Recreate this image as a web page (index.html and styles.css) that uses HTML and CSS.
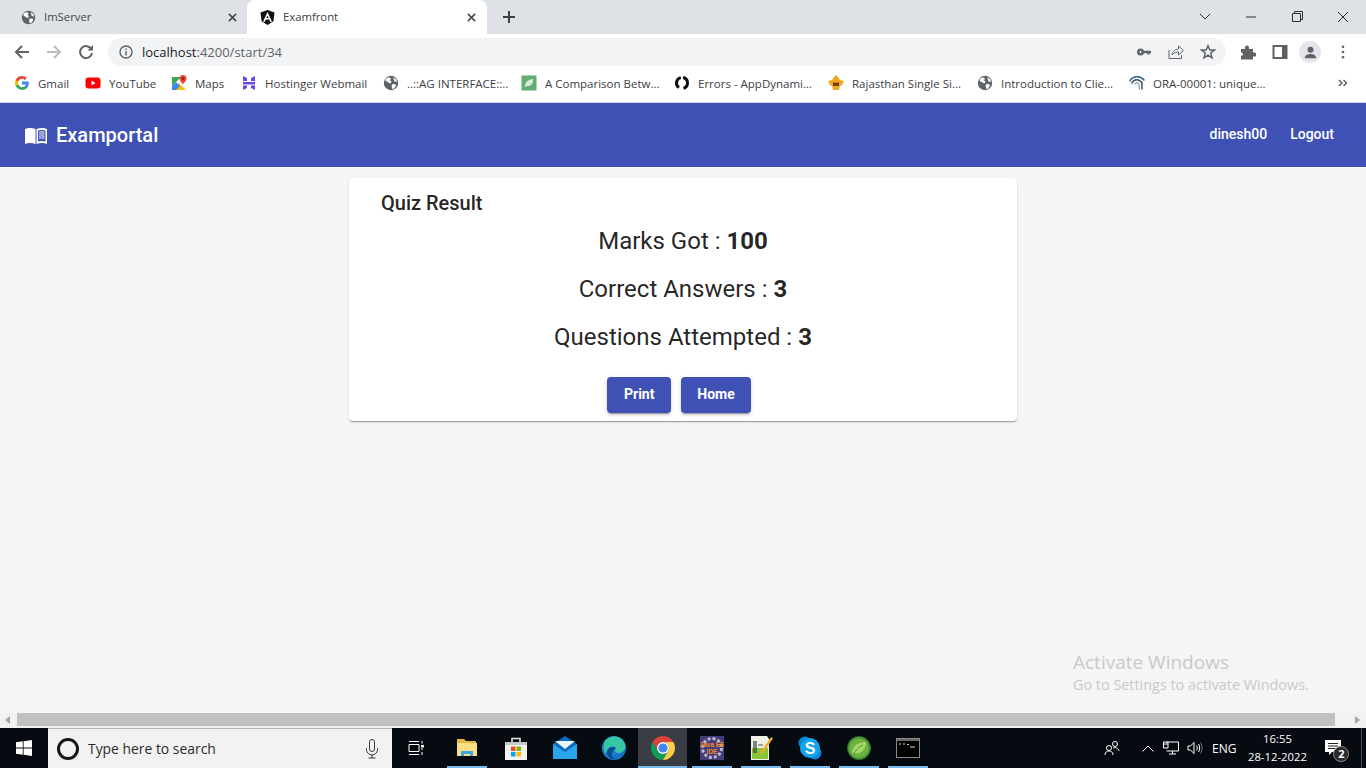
FILE: index.html
```html
<!DOCTYPE html>
<html lang="en">
<head>
  <meta charset="UTF-8">
  <title>Examfront</title>
  <link rel="stylesheet" href="styles.css">
</head>
<body>

  <svg class="defs" width="0" height="0">
    <symbol id="globe" viewBox="0 0 16 16">
      <circle cx="8" cy="8" r="7.2" fill="#5f6368"/>
      <path d="M3 3.4 6.2 2.2 8 3.4 7 5.2 8.6 6.4 7.4 8.4 5.2 7.6 2.4 5.6ZM9 9.2 12.2 9 13 11 11 13.6 9.4 14 8.6 11.4ZM10.2 2.2 13.4 4.6 13.8 7 11.4 6.4 10.8 4Z" fill="#fff"/>
    </symbol>
  </svg>

  <header class="browser">
    <div class="tabstrip">
      <div class="tab">
        <svg class="favicon" viewBox="0 0 16 16"><use href="#globe"/></svg>
        <span class="tab-title">ImServer</span>
        <svg class="tab-close" viewBox="0 0 10 10"><path d="M1 1 9 9M9 1 1 9"/></svg>
      </div>
      <div class="tab tab-active">
        <svg class="favicon" viewBox="0 0 16 16">
          <path d="M8 0 15.5 2.6 14.3 12 8 16 1.700 12 .5 2.6Z" fill="#111"/>
          <path d="M8 2 3.2 12.5H5.2L6.2 10H9.8L10.8 12.5H12.8ZM8 5.8 9.2 8.5H6.8Z" fill="#fff"/>
        </svg>
        <span class="tab-title">Examfront</span>
        <svg class="tab-close" viewBox="0 0 10 10"><path d="M1 1 9 9M9 1 1 9"/></svg>
      </div>
      <svg class="new-tab" viewBox="0 0 12 12"><path d="M6 0V12M0 6H12"/></svg>
      <div class="window-controls">
        <svg viewBox="0 0 46 14"><path d="M18 4 23 9 28 4"/></svg>
        <svg viewBox="0 0 46 14"><path d="M18 7H28"/></svg>
        <svg viewBox="0 0 46 14"><path d="M18.5 3.5H26.5V11.5H18.5ZM20.5 3.5V1.5H28.5V9.5H26.5"/></svg>
        <svg viewBox="0 0 46 14"><path d="M18 2 28 12M28 2 18 12"/></svg>
      </div>
    </div>

    <div class="toolbar">
      <div class="nav-buttons">
        <svg viewBox="0 0 16 16"><path d="M15 8H2M8 2 2 8 8 14"/></svg>
        <svg class="nav-disabled" viewBox="0 0 16 16"><path d="M1 8H14M8 2 14 8 8 14"/></svg>
        <svg viewBox="0 0 16 16"><path d="M13.5 5.5A6 6 0 1 0 14 9"/><path class="solid" d="M9.5 6.5H15V1Z"/></svg>
      </div>
      <div class="omnibox">
        <svg class="info" viewBox="0 0 14 14"><circle cx="7" cy="7" r="6"/><path d="M7 6V10.5M7 3.5V5"/></svg>
        <span class="url">localhost<span class="url-path">:4200/start/34</span></span>
        <div class="omni-icons">
          <svg viewBox="0 0 16 16"><circle class="solid" cx="4.5" cy="8" r="3.5"/><path d="M7 8H15M12.5 8V10.5" stroke-width="2.4"/><circle cx="4.5" cy="8" r="1" fill="#fff" stroke="none"/></svg>
          <svg viewBox="0 0 16 16"><path class="thin" d="M1 6V14.5H13.5V11M4 11C4.5 7 8 5 10.5 5V2L15.5 6.5 10.5 11V8C8 8 5.5 9 4 11Z"/></svg>
          <svg viewBox="0 0 16 16"><path d="M8 1.8 9.8 6H14.5L10.8 9 12 13.8 8 11.2 4 13.8 5.2 9 1.5 6H6.2Z"/></svg>
        </div>
      </div>
      <div class="toolbar-icons">
        <svg viewBox="0 0 16 16"><path class="solid" d="M1 5H5V3.5A2 2 0 0 1 9 3.5V5H13V8.5H14.5A2 2 0 0 1 14.5 12.5H13V15.5H1V11.8H2A2 2 0 0 0 2 8.5H1Z"/></svg>
        <svg viewBox="0 0 16 16"><path d="M1.5 2H14.5V14H1.5Z" stroke-width="2"/><path class="solid" d="M10 2H15V14H10Z"/></svg>
        <div class="avatar">
          <svg viewBox="0 0 16 16"><circle class="solid" cx="8" cy="5" r="3.2"/><path class="solid" d="M2 14C2 10.5 5 9.5 8 9.5S14 10.5 14 14Z"/></svg>
        </div>
        <svg class="dots" viewBox="0 0 4 16"><circle cx="2" cy="2" r="1.5"/><circle cx="2" cy="8" r="1.5"/><circle cx="2" cy="14" r="1.5"/></svg>
      </div>
    </div>

    <div class="bookmarks">
      <a class="bookmark bm-gmail">
        <svg viewBox="0 0 16 16">
          <path d="M14.8 8.2C14.8 7.6 14.7 7.1 14.6 6.6H8V9.4H11.8C11.6 10.3 11.1 11 10.3 11.5V13.3H12.6C14 12 14.8 10.3 14.8 8.2Z" fill="#4285f4"/>
          <path d="M8 15C9.9 15 11.4 14.4 12.6 13.3L10.3 11.5C9.7 11.9 8.9 12.2 8 12.2 6.2 12.2 4.6 11 4.1 9.3H1.7V11.1C2.9 13.4 5.3 15 8 15Z" fill="#34a853"/>
          <path d="M4.1 9.3C3.8 8.4 3.8 7.6 4.1 6.7V4.9H1.7C.8 6.8.8 9.2 1.7 11.1Z" fill="#fbbc05"/>
          <path d="M8 3.8C9 3.8 10 4.2 10.7 4.9L12.7 2.9C11.4 1.7 9.8 1 8 1 5.3 1 2.9 2.6 1.7 4.9L4.1 6.7C4.6 5 6.2 3.8 8 3.8Z" fill="#ea4335"/>
        </svg>
        <span>Gmail</span>
      </a>
      <a class="bookmark bm-youtube">
        <svg viewBox="0 0 16 16"><rect x="0.5" y="2.5" width="15" height="11" rx="3" fill="#f00"/><path d="M6.5 5.5 10.5 8 6.5 10.5Z" fill="#fff"/></svg>
        <span>YouTube</span>
      </a>
      <a class="bookmark bm-maps">
        <svg viewBox="0 0 16 16">
          <path d="M1 2H10L1 11Z" fill="#34a853"/>
          <path d="M1 15 8 8 15 15Z" fill="#fbbc05"/>
          <path d="M1 11 5 7 9 11 5 15H1Z" fill="#4285f4"/>
          <path d="M15 15 9 9 11 7 15 11Z" fill="#f1f3f4"/>
          <path d="M12 0A3.5 3.5 0 0 0 8.5 3.5C8.5 6 12 9 12 9S15.5 6 15.5 3.5A3.5 3.5 0 0 0 12 0Z" fill="#ea4335"/>
          <circle cx="12" cy="3.5" r="1.2" fill="#8b1a10"/>
        </svg>
        <span>Maps</span>
      </a>
      <a class="bookmark bm-hostinger">
        <svg viewBox="0 0 16 16"><path d="M2 1 6 3V6H2ZM14 15 10 13V10.5H14ZM2 7H14V9.5H2ZM10 3 14 1V6H10ZM6 13 2 15V10.5H6Z" fill="#6747e6"/></svg>
        <span>Hostinger Webmail</span>
      </a>
      <a class="bookmark bm-ag">
        <svg viewBox="0 0 16 16"><use href="#globe"/></svg>
        <span>..::AG INTERFACE::..</span>
      </a>
      <a class="bookmark bm-comparison">
        <svg viewBox="0 0 16 16"><rect x="0.5" y="0.5" width="15" height="15" fill="#62ae72"/><path d="M4 12C4 7 7 4.5 12 4 12.5 8.5 10 11.5 6 11L4 12.5Z" fill="#d8ecd8"/></svg>
        <span>A Comparison Betw...</span>
      </a>
      <a class="bookmark bm-appd">
        <svg viewBox="0 0 16 16" fill="none" stroke="#0c0c0c" stroke-width="3"><path d="M6.8 2.6A5.5 5.5 0 0 0 5 12.6"/><path d="M9 2.6A5.5 5.5 0 0 1 9.5 13.3"/></svg>
        <span>Errors - AppDynami...</span>
      </a>
      <a class="bookmark bm-rajasthan">
        <svg viewBox="0 0 16 16"><path d="M0 6 4 5 6 2 8 0 10 2 12 5 16 6 14 10 12 11 11 15H5L4 11 2 10Z" fill="#f0a722"/><path d="M5 7.5H11V11H5Z" fill="#7a3e12"/></svg>
        <span>Rajasthan Single Si...</span>
      </a>
      <a class="bookmark bm-intro">
        <svg viewBox="0 0 16 16"><use href="#globe"/></svg>
        <span>Introduction to Clie...</span>
      </a>
      <a class="bookmark bm-ora">
        <svg viewBox="0 0 16 16" fill="none" stroke-linecap="round">
          <path d="M1 6C3 1 11 0 15 5" stroke="#29628f" stroke-width="1.5"/>
          <path d="M3 8C5 4 10 3.5 13 8L13 14" stroke="#4a4f55" stroke-width="1.5"/>
          <path d="M6 9C7 7 9 7 10 9.5L10.5 14" stroke="#6fa8d0" stroke-width="1.3"/>
        </svg>
        <span>ORA-00001: unique...</span>
      </a>
      <svg class="bookmarks-more" viewBox="0 0 10 8"><path d="M1 1 4 4 1 7M5.5 1 8.5 4 5.5 7"/></svg>
    </div>
  </header>

  <nav class="navbar">
    <a class="brand">
      <svg class="brand-icon" viewBox="0 0 22 17">
        <path d="M0 2C3 .5 7 .5 10.5 2V17C7 15.5 3 15.5 0 17Z" fill="#fff"/>
        <path d="M11.5 2C15 .5 19 .5 22 2V17C19 15.5 15 15.5 11.5 17Z" fill="#fff"/>
        <path d="M13 3.5C15 2.7 18 2.7 20.5 3.5V14.5C18 13.8 15 13.8 13 14.5Z" fill="#3f51b5"/>
        <path d="M14 5.3C15.5 4.8 17.5 4.8 19.5 5.3M14 7.3C15.5 6.8 17.5 6.8 19.5 7.3M14 9.3C15.5 8.8 17.5 8.8 19.5 9.3M14 11.3C15.5 10.8 17.5 10.8 19.5 11.3" fill="none" stroke="#fff" stroke-width="1"/>
      </svg>
      <span>Examportal</span>
    </a>
    <div class="nav-links">
      <a class="nav-link">dinesh00</a>
      <a class="nav-link">Logout</a>
    </div>
  </nav>

  <main class="page">
    <section class="card">
      <h2 class="card-title">Quiz Result</h2>
      <div class="result">
        <h1>Marks Got : <b>100</b></h1>
        <h1>Correct Answers : <b>3</b></h1>
        <h1>Questions Attempted : <b>3</b></h1>
      </div>
      <div class="card-actions">
        <button class="btn">Print</button>
        <button class="btn">Home</button>
      </div>
    </section>
    <div class="activate">
      <div class="activate-title">Activate Windows</div>
      <div class="activate-sub">Go to Settings to activate Windows.</div>
    </div>
  </main>

  <div class="hscroll">
    <svg class="arrow" viewBox="0 0 6 8"><path d="M5 0V8L0 4Z"/></svg>
    <div class="hscroll-track"><div class="hscroll-thumb"></div></div>
    <svg class="arrow" viewBox="0 0 6 8"><path d="M1 0V8L6 4Z"/></svg>
  </div>

  <footer class="taskbar">
    <div class="start">
      <svg viewBox="0 0 16 16"><path d="M0 2.3 6.8 1.3V7.6H0ZM7.6 1.2 16 0V7.6H7.6ZM0 8.4H6.8V14.7L0 13.7ZM7.6 8.4H16V16L7.6 14.8Z" fill="#fff"/></svg>
    </div>
    <div class="search">
      <span class="cortana"></span>
      <span class="search-text">Type here to search</span>
      <svg class="mic" viewBox="0 0 14 20"><rect x="4.5" y="0.5" width="5" height="12" rx="2.5"/><path d="M1.5 9V10.5A5.5 5.5 0 0 0 12.5 10.5V9M7 16V19M3.5 19H10.5"/></svg>
    </div>
    <div class="task-view">
      <svg viewBox="0 0 16 16"><path d="M1 4.5H11V11.5H1ZM1 1.5H11M1 14.5H11M14 1V3.5M14 8V10M14 12V15" fill="none" stroke="#fff" stroke-width="1"/><rect x="13" y="5" width="3" height="2.5" fill="#fff"/></svg>
    </div>
    <div class="apps">
      <div class="app open">
        <svg viewBox="0 0 24 24">
          <path d="M2 3H9L11 5H21V9H2Z" fill="#e8b73f"/>
          <path d="M2 7H22V20H2Z" fill="#fbdf84"/>
          <path d="M6 20V15H18V20H15V18H9V20Z" fill="#3fa6de"/>
        </svg>
      </div>
      <div class="app">
        <svg viewBox="0 0 24 24">
          <path d="M8 7V2.5H16V7" fill="none" stroke="#e6e6e6" stroke-width="1.6"/>
          <path d="M1 6H23V24H1Z" fill="#f3f3f3"/>
          <path d="M1 6H23V9H1Z" fill="#c9c9c9"/>
          <rect x="7" y="10.5" width="4.5" height="4.5" fill="#f25022"/>
          <rect x="12.5" y="10.5" width="4.5" height="4.5" fill="#7fba00"/>
          <rect x="7" y="16" width="4.5" height="4.5" fill="#00a4ef"/>
          <rect x="12.5" y="16" width="4.5" height="4.5" fill="#ffb900"/>
        </svg>
      </div>
      <div class="app">
        <svg viewBox="0 0 24 24">
          <path d="M0 8 12 0 24 8V23H0Z" fill="#0b6cbf"/>
          <path d="M0 8 12 16 24 8V23H0Z" fill="#29a5ea"/>
          <path d="M2 5 22 5 12 13Z" fill="#e8f3fb"/>
        </svg>
      </div>
      <div class="app">
        <svg viewBox="0 0 24 24">
          <circle cx="12" cy="12" r="12" fill="#1d7fd1"/>
          <path d="M3 5C7-1 19-2 23 8 24 13 22 17 17 17 13 17 12 14 14 12 10 9 4 12 4 18 1 14 1 9 3 5Z" fill="#35c7a5"/>
          <path d="M24 11C24 16 21 20 17 22 13 24 7 24 4 18 6 21 12 22 14 18 15 17 21 19 24 11Z" fill="#1572c4"/>
          <path d="M14 12C10 9 5 12 5 17 5 21 10 24 14 23 9 22 8 16 14 12Z" fill="#0c4d92"/>
        </svg>
      </div>
      <div class="app app-active open">
        <svg viewBox="0 0 24 24">
          <path d="M12 0A12 12 0 0 1 22.39 6H12A6 6 0 0 0 6.8 15L1.61 6A12 12 0 0 1 12 0Z" fill="#db4437"/>
          <path d="M12 24A12 12 0 0 1 1.61 6L6.8 15A6 6 0 0 0 17.2 15Z" fill="#0f9d58"/>
          <path d="M22.39 6A12 12 0 0 1 12 24L17.2 15A6 6 0 0 0 12 6H22.39Z" fill="#ffcd40"/>
          <circle cx="12" cy="12" r="6" fill="#fff"/>
          <circle cx="12" cy="12" r="4.6" fill="#4285f4"/>
        </svg>
      </div>
      <div class="app open">
        <svg viewBox="0 0 24 24">
          <rect width="24" height="24" fill="#473b7c"/>
          <circle cx="12" cy="12" r="9.5" fill="none" stroke="#b9b9c4" stroke-width="3" stroke-dasharray="3 2"/>
          <text x="12" y="11" class="ide-text">Java EE</text>
          <text x="12" y="18" class="ide-text">IDE</text>
        </svg>
      </div>
      <div class="app open">
        <svg viewBox="0 0 24 24">
          <path d="M2 0H18L20 3V24H2Z" fill="#eef0e8"/>
          <path d="M3 12H19V23H3Z" fill="#86c43a"/>
          <path d="M5 5V17M7 5V17" stroke="#3a3a3a" stroke-width="1.2"/>
          <path d="M9 9H14" stroke="#555" stroke-width="1"/>
          <path d="M22 1 24 2.5 14 17 11 19 12 15.5Z" fill="#f0a928"/>
        </svg>
      </div>
      <div class="app open">
        <svg viewBox="0 0 24 24">
          <circle cx="7" cy="7" r="6.5" fill="#0a84d6"/>
          <circle cx="17" cy="17" r="6.5" fill="#0a84d6"/>
          <circle cx="12" cy="12" r="10" fill="#12a5eb"/>
          <text x="12" y="17.5" class="skype-text">S</text>
        </svg>
      </div>
      <div class="app open">
        <svg viewBox="0 0 24 24">
          <circle cx="12" cy="12" r="11.5" fill="#4a9a38" stroke="#2f7a2a" stroke-width="1" stroke-dasharray="2 1.5"/>
          <circle cx="12" cy="12" r="9.5" fill="#6cb33f"/>
          <path d="M5 18C5 10 11 6 19 6 19 13 14 19 7 17Z" fill="#a5d86b"/>
          <path d="M6 18C9 14 12 11 16 9" stroke="#4a9a38" fill="none"/>
        </svg>
      </div>
      <div class="app open">
        <svg viewBox="0 0 24 20">
          <rect x="0.5" y="0.5" width="23" height="19" fill="#000" stroke="#8a8a8a"/>
          <rect x="1" y="1" width="22" height="2" fill="#6a6a6a"/>
          <path d="M3 6H5M7 6H9M11 6.5H13M14 9H19" stroke="#d8d8d8" stroke-width="1"/>
        </svg>
      </div>
    </div>
    <div class="tray">
      <svg class="tray-people" viewBox="0 0 16 16"><circle cx="5" cy="8" r="2.5"/><path d="M1 15C1 12 3 11 5 11S9 12 9 15"/><circle cx="11" cy="4" r="2.5"/><path d="M9 8C11 7 14 7.5 15 11"/></svg>
      <svg class="tray-chevron" viewBox="0 0 12 7"><path d="M0.5 6.5 6 1 11.5 6.5"/></svg>
      <svg class="tray-net" viewBox="0 0 16 14"><path d="M3.5 1H15.5V10H3.5M9.5 10V13M6 13H13"/><path d="M.5 1H5V7H.5ZM.5 3H5"/></svg>
      <svg class="tray-vol" viewBox="0 0 16 14"><path d="M1 5H3.5L7 1.5V12.5L3.5 9H1ZM9.5 4.5C10.5 6 10.5 8 9.5 9.5M11.5 3C13 5 13 9 11.5 11"/><path class="tray-vol-dim" d="M13.5 1.5C15.5 4.5 15.5 9.5 13.5 12.5"/></svg>
      <span class="tray-lang">ENG</span>
      <div class="clock">
        <div>16:55</div>
        <div>28-12-2022</div>
      </div>
      <div class="notify">
        <svg viewBox="0 0 16 16"><path d="M0 0H16V12H7L4 15V12H0Z" fill="#fff"/><path d="M3 3.5H13M3 6H13M3 8.5H10" stroke="#222" stroke-width="1"/></svg>
        <span class="notify-count">2</span>
      </div>
      <span class="show-desktop"></span>
    </div>
  </footer>

</body>
</html>
```

FILE: styles.css
```css
* {
  box-sizing: border-box;
}

html, body {
  height: 100%;
}

body {
  margin: 0;
  width: 1366px;
  height: 768px;
  overflow: hidden;
  display: flex;
  flex-direction: column;
  font-family: Roboto, sans-serif;
  background: #f5f5f5;
  color: rgba(0, 0, 0, 0.87);
}

svg {
  display: block;
  flex: none;
}

.defs {
  position: absolute;
}

.solid {
  fill: #5f6368;
  stroke: none;
}

.browser {
  font-family: "Open Sans", sans-serif;
  background: #fff;
  height: 103px;
  border-bottom: 1px solid #d0d2d6;
}

.tabstrip {
  height: 34px;
  background: #dee1e6;
  display: flex;
  align-items: center;
  padding-left: 8px;
}

.tab {
  width: 239px;
  height: 34px;
  display: flex;
  align-items: center;
  padding: 0 10px 0 13px;
  border-radius: 8px 8px 0 0;
  font-size: 11.3px;
  color: #45474a;
}

.tab-active {
  width: 240px;
  background: #fff;
  color: #3c4043;
  padding: 0 11px 0 13px;
}

.favicon {
  width: 15px;
  height: 15px;
}

.tab-title {
  flex: 1;
  margin: 0 0 2px 8px;
}

.tab-close {
  width: 9px;
  height: 9px;
  fill: none;
  stroke: #45474a;
  stroke-width: 1.7;
}

.new-tab {
  width: 12px;
  height: 12px;
  margin-left: 16px;
  fill: none;
  stroke: #3c4043;
  stroke-width: 2;
}

.window-controls {
  margin-left: auto;
  display: flex;
  height: 34px;
  align-items: center;
}

.window-controls svg {
  width: 46px;
  height: 14px;
  fill: none;
  stroke: #2d2f31;
  stroke-width: 1;
}

.toolbar {
  height: 32px;
  padding-top: 4px;
  display: flex;
  align-items: center;
}

.nav-buttons {
  width: 108px;
  padding-left: 14px;
  display: flex;
  gap: 16px;
}

.nav-buttons svg {
  width: 16px;
  height: 16px;
  fill: none;
  stroke: #5f6368;
  stroke-width: 2;
}

.nav-buttons .nav-disabled {
  stroke: #babcbe;
}

.omnibox {
  width: 1118px;
  height: 28px;
  border-radius: 14px;
  background: #f1f3f4;
  display: flex;
  align-items: center;
  padding-left: 11px;
  font-size: 13px;
}

.info {
  width: 14px;
  height: 14px;
  fill: none;
  stroke: #5f6368;
  stroke-width: 1.4;
}

.url {
  margin-left: 9px;
  color: #202124;
}

.url-path {
  color: #5f6368;
}

.omni-icons {
  margin-left: auto;
  margin-right: 10px;
  display: flex;
  gap: 16px;
}

.omni-icons svg {
  width: 16px;
  height: 16px;
  fill: none;
  stroke: #5f6368;
  stroke-width: 1.5;
}

.omni-icons .thin {
  stroke-width: 1;
}

.toolbar-icons {
  display: flex;
  align-items: center;
  padding-left: 14px;
}

.toolbar-icons > svg {
  width: 16px;
  height: 16px;
  fill: none;
  stroke: #5f6368;
  margin-right: 16px;
}

.avatar {
  width: 22px;
  height: 22px;
  border-radius: 50%;
  background: #e3e5ea;
  display: flex;
  align-items: center;
  justify-content: center;
  margin: 0 20px 0 -5px;
}

.avatar svg {
  width: 15px;
  height: 15px;
}

.toolbar-icons .dots {
  width: 4px;
  height: 14px;
  fill: #5f6368;
  stroke: none;
  margin: 0;
}

.bookmarks {
  height: 36px;
  display: flex;
  align-items: center;
  padding: 0 0 2px 14px;
  gap: 16px;
  font-size: 11.5px;
  color: #3c4043;
}

.bookmark {
  display: flex;
  align-items: center;
  gap: 8px;
}

.bookmark svg {
  width: 16px;
  height: 16px;
}

.bookmark span {
  white-space: nowrap;
}

.bm-gmail { width: 55px; }
.bm-youtube { width: 70px; }
.bm-maps { width: 54px; }
.bm-hostinger { width: 126px; }
.bm-ag { width: 122px; }
.bm-comparison { width: 137px; }
.bm-appd { width: 138px; }
.bm-rajasthan { width: 133px; }
.bm-intro { width: 136px; }
.bm-ora { width: 137px; }

.bookmarks-more {
  width: 10px;
  height: 8px;
  margin-left: 56px;
  fill: none;
  stroke: #5f6368;
  stroke-width: 1.5;
}

.navbar {
  height: 64px;
  flex: none;
  background: #3f51b5;
  color: #fff;
  display: flex;
  align-items: center;
  padding: 0 16px 0 25px;
}

.brand {
  display: flex;
  align-items: center;
  gap: 9px;
  font-size: 20px;
  font-weight: 500;
}

.brand-icon {
  width: 22px;
  height: 17px;
}

.nav-links {
  margin-left: auto;
  display: flex;
  margin-bottom: 2px;
}

.nav-link {
  padding: 0 16px;
  font-size: 14px;
  font-weight: 500;
  line-height: 36px;
}

.nav-link + .nav-link {
  margin-left: -9px;
}

.page {
  flex: 1;
  position: relative;
  padding-top: 11px;
}

.card {
  width: 668px;
  height: 243px;
  margin: 0 auto;
  padding: 16px;
  background: #fff;
  border-radius: 4px;
  box-shadow: 0 2px 1px -1px rgba(0, 0, 0, 0.2), 0 1px 1px 0 rgba(0, 0, 0, 0.14), 0 1px 3px 0 rgba(0, 0, 0, 0.12);
}

.card-title {
  margin: -1px 0 0 16px;
  font-size: 20px;
  line-height: 20px;
  font-weight: 500;
}

.result {
  text-align: center;
  margin-top: 12px;
}

.result h1 {
  margin: 0 0 16px;
  font-size: 24px;
  line-height: 32px;
  font-weight: 400;
}

.result b {
  font-weight: 700;
}

.card-actions {
  display: flex;
  justify-content: center;
  gap: 10px;
  padding-right: 8px;
  margin-top: 24px;
}

.btn {
  height: 36px;
  padding: 0 16px 2px;
  min-width: 64px;
  border: none;
  border-radius: 4px;
  background: #3f51b5;
  color: #fff;
  font-family: Roboto, sans-serif;
  font-size: 14px;
  font-weight: 700;
  box-shadow: 0 3px 1px -2px rgba(0, 0, 0, 0.2), 0 2px 2px 0 rgba(0, 0, 0, 0.14), 0 1px 5px 0 rgba(0, 0, 0, 0.12);
}

.activate {
  position: absolute;
  left: 1073px;
  top: 482px;
  font-family: "Open Sans", sans-serif;
  color: #c9c9c9;
}

.activate-title {
  font-size: 19px;
  line-height: 26px;
}

.activate-sub {
  font-size: 14.4px;
  line-height: 20px;
}

.hscroll {
  height: 15px;
  flex: none;
  display: flex;
  align-items: flex-start;
  background: #f1f1f1;
}

.arrow {
  width: 6px;
  height: 8px;
  margin: 3px 6px 0 5px;
  fill: #a3a3a3;
}

.hscroll-track {
  flex: 1;
}

.hscroll-thumb {
  width: 1318px;
  height: 13px;
  background: #c1c1c1;
}

.taskbar {
  height: 40px;
  flex: none;
  background: #060b12;
  display: flex;
  align-items: stretch;
  font-family: "Open Sans", sans-serif;
  color: #fff;
}

.start {
  width: 48px;
  display: flex;
  align-items: center;
  justify-content: center;
}

.start svg {
  width: 16px;
  height: 16px;
}

.search {
  width: 344px;
  background: #f2f2f2;
  border-top: 1px solid #b5b5b5;
  display: flex;
  align-items: center;
  padding: 0 13px 0 9px;
  color: #2b2b2b;
  font-size: 13.9px;
}

.cortana {
  width: 22px;
  height: 22px;
  border-radius: 50%;
  border: 3px solid #161616;
}

.search-text {
  margin-left: 9px;
}

.mic {
  margin-left: auto;
  width: 14px;
  height: 20px;
  fill: none;
  stroke: #3a3a3a;
  stroke-width: 1;
}

.task-view {
  width: 48px;
  display: flex;
  align-items: center;
  justify-content: center;
}

.task-view svg {
  width: 16px;
  height: 16px;
}

.apps {
  display: flex;
  padding-left: 2px;
}

.app {
  width: 49px;
  display: flex;
  align-items: center;
  justify-content: center;
  position: relative;
}

.app svg {
  width: 24px;
  height: 24px;
}

.app.open::after {
  content: "";
  position: absolute;
  left: 5px;
  right: 4px;
  bottom: 0;
  height: 2px;
  background: #76b9ed;
}

.app-active {
  background: #3a3e44;
}

.app-active.open::after {
  left: 0;
  right: 0;
}

.ide-text {
  fill: #f08a24;
  font-family: "Liberation Sans", sans-serif;
  font-size: 6.5px;
  font-weight: 700;
  text-anchor: middle;
}

.skype-text {
  fill: #fff;
  font-family: "Liberation Sans", sans-serif;
  font-size: 16px;
  font-weight: 700;
  text-anchor: middle;
}

.tray {
  flex: 1;
  display: flex;
  align-items: center;
  padding-left: 172px;
  font-size: 12px;
}

.tray svg {
  fill: none;
  stroke: #fff;
  stroke-width: 1;
}

.tray-people {
  width: 16px;
  height: 16px;
}

.tray-chevron {
  width: 12px;
  height: 7px;
  margin-left: 22px;
}

.tray-net {
  width: 16px;
  height: 14px;
  margin-left: 9px;
}

.tray-vol {
  width: 16px;
  height: 14px;
  margin-left: 8px;
}

.tray svg .tray-vol-dim {
  stroke: #777;
}

.tray-lang {
  margin-left: 9px;
}

.clock {
  margin-left: 11px;
  width: 60px;
  text-align: center;
  font-size: 11.3px;
  line-height: 18px;
  white-space: nowrap;
}

.notify {
  margin-left: 18px;
  position: relative;
}

.notify svg {
  width: 16px;
  height: 16px;
  stroke: none;
}

.notify-count {
  position: absolute;
  left: 8px;
  top: 6px;
  width: 16px;
  height: 16px;
  border-radius: 50%;
  background: #2b2b2b;
  border: 1px solid #888;
  font-size: 11px;
  font-weight: 700;
  line-height: 14px;
  text-align: center;
}

.show-desktop {
  margin-left: auto;
  margin-right: 4px;
  width: 1px;
  align-self: stretch;
  background: #4a4d52;
}
```
